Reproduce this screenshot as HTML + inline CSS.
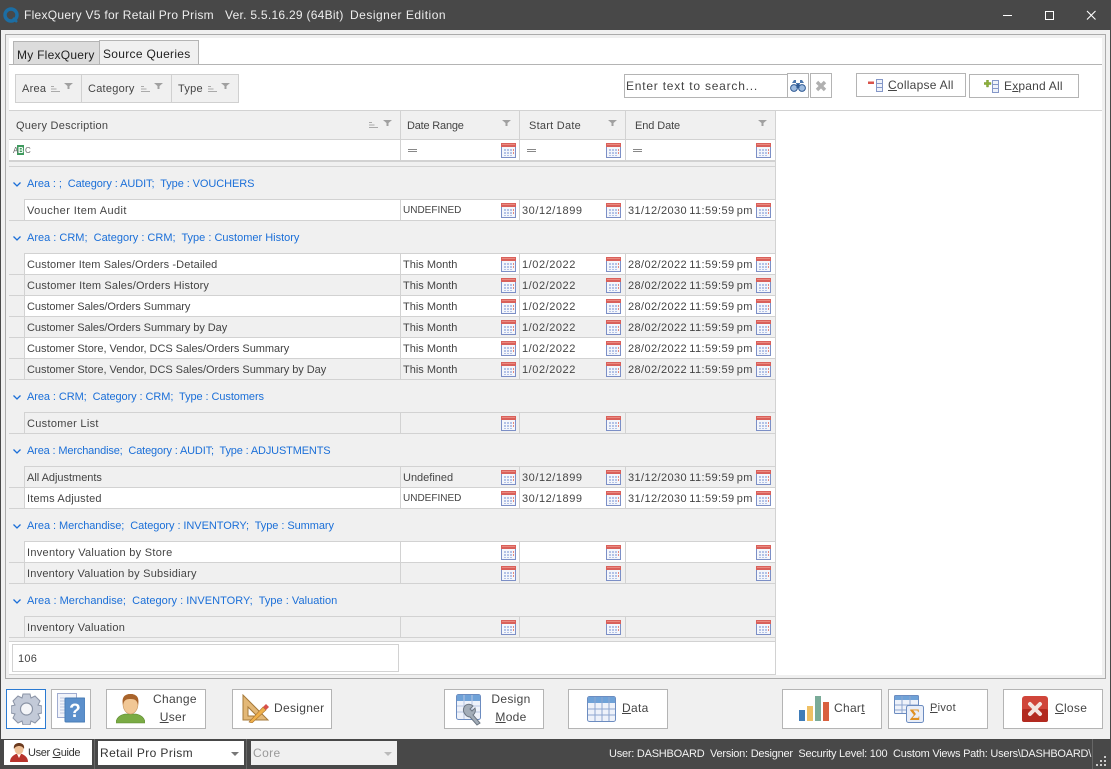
<!DOCTYPE html>
<html><head><meta charset="utf-8">
<style>
*{box-sizing:border-box}
html,body{margin:0;padding:0;width:1111px;height:769px;overflow:hidden;background:#f0f0f0}
body{position:relative;font-family:"Liberation Sans",sans-serif;font-size:11px;color:#444;letter-spacing:.25px}
.x{position:absolute}
.t{position:absolute;white-space:nowrap;line-height:14px}
.r{position:absolute;left:9px;width:767px;height:21px;border-bottom:1px solid #d2d2d2;border-right:1px solid #d2d2d2}
.r .bx{position:absolute;left:15px;top:0;width:751px;height:20px;background:#fff;border-left:1px solid #d2d2d2}
.r.g .bx{background:#f0f0f0}
.r .s{position:absolute;top:0;height:20px;width:1px;background:#d2d2d2}
.r .s1{left:391px}.r .s2{left:510px}.r .s3{left:616px}
.r span{position:absolute;top:4px;white-space:nowrap;line-height:14px}
.r .a{left:18px}.r .b{left:394px;letter-spacing:0}.r .b.u{font-size:10px}.r .c{left:513px;letter-spacing:.55px}.r .d{left:619px;letter-spacing:.4px;word-spacing:-1.2px}
.r svg,.cal{position:absolute;width:15px;height:15px}
.r svg{top:3px}
.i1{left:492px}.i2{left:597px}.i3{left:747px}
.gt{position:absolute;left:27px;color:#1b6fd8;white-space:nowrap;line-height:14px;letter-spacing:-.08px}
.ch{position:absolute;left:13px;width:8px;height:5px}
.btn{position:absolute;top:689px;width:100px;height:40px;background:#fff;border:1px solid #b4b4b4}
.btn svg{position:absolute}
.lbl{position:absolute;font-size:12px;line-height:18px;text-align:center;color:#444;white-space:nowrap;letter-spacing:.3px}
u{text-underline-offset:1px}
</style></head><body>
<svg width="0" height="0" style="position:absolute">
<symbol id="cal" viewBox="0 0 15 15">
<rect x=".5" y=".5" width="14" height="14" fill="#f4f6fb" stroke="#7c8fc6"/>
<rect x="0" y="0" width="15" height="4" fill="#d9605a"/>
<rect x="1" y="1" width="13" height="1" fill="#ea8a80"/>
<g fill="#b3c2e6"><rect x="3" y="6" width="2" height="2"/><rect x="6" y="6" width="2" height="2"/><rect x="9" y="6" width="2" height="2"/><rect x="12" y="6" width="1" height="2" fill="#e68a7e"/><rect x="3" y="9" width="2" height="2"/><rect x="6" y="9" width="2" height="2"/><rect x="9" y="9" width="2" height="2"/><rect x="12" y="9" width="1" height="2" fill="#e68a7e"/><rect x="3" y="12" width="2" height="1"/><rect x="6" y="12" width="2" height="1"/><rect x="9" y="12" width="2" height="1"/></g>
</symbol>
<symbol id="sort" viewBox="0 0 9 6"><path d="M0 .5h3M0 3h5.500M0 5.500h9" stroke="#aaa" fill="none"/></symbol>
<symbol id="fn" viewBox="0 0 9 6"><path d="M0 0h9L5.500 3v3h-2V3z" fill="#a0a0a0"/></symbol>
<symbol id="chev" viewBox="0 0 8 5"><path d="M.5 .5L4 4 7.500 .5" stroke="#1b6fd8" stroke-width="1.300" fill="none"/></symbol>
</svg>

<!-- title bar -->
<div class="x" style="left:0;top:0;width:1111px;height:30px;background:#484848"></div>
<svg class="x" style="left:3px;top:7px;width:16px;height:16px" viewBox="0 0 16 16"><circle cx="8" cy="8" r="6" fill="none" stroke="#1c6ea4" stroke-width="3.400"/><path d="M10 11l4 4" stroke="#1c6ea4" stroke-width="2.500"/></svg>
<div class="t" style="left:24px;top:8px;color:#eee;font-size:12px;letter-spacing:.28px">FlexQuery V5 for Retail Pro Prism</div>
<div class="t" style="left:225px;top:8px;color:#eee;font-size:12px;letter-spacing:.27px">Ver. 5.5.16.29 (64Bit)</div>
<div class="t" style="left:350px;top:8px;color:#eee;font-size:12px;letter-spacing:.5px">Designer Edition</div>
<div class="x" style="left:1003px;top:15px;width:9px;height:1px;background:#fff"></div>
<div class="x" style="left:1045px;top:11px;width:9px;height:9px;border:1px solid #fff"></div>
<svg class="x" style="left:1086px;top:10px;width:11px;height:11px" viewBox="0 0 11 11"><path d="M1 1l8.500 8.500M9.500 1L1 9.500" stroke="#fff" stroke-width="1.100" fill="none"/></svg>

<!-- window edges -->
<div class="x" style="left:0;top:30px;width:1px;height:710px;background:#484848"></div>
<div class="x" style="left:1110px;top:30px;width:1px;height:710px;background:#484848"></div>

<!-- main panel -->
<div class="x" style="left:5px;top:34px;width:1101px;height:645px;background:#f0f0f0;border:1px solid #ababab"></div>
<div class="x" style="left:9px;top:38px;width:1093px;height:637px;background:#fff"></div>

<!-- tabs -->
<div class="x" style="left:13px;top:41px;width:87px;height:24px;background:#dcdcdc;border:1px solid #b4b4b4"></div>
<div class="t" style="left:17px;top:48px;color:#222;font-size:12px;letter-spacing:.25px">My FlexQuery</div>
<div class="x" style="left:99px;top:40px;width:100px;height:25px;background:#f0f0f0;border:1px solid #b4b4b4;border-bottom:0"></div>
<div class="t" style="left:103px;top:47px;color:#222;font-size:12px;letter-spacing:.3px">Source Queries</div>
<div class="x" style="left:9px;top:64px;width:1093px;height:1px;background:#b4b4b4"></div>
<div class="x" style="left:99px;top:64px;width:100px;height:1px;background:#b4b4b4"></div>

<!-- group chips -->
<div class="x" style="left:15px;top:74px;width:224px;height:29px;background:#f0f0f0;border:1px solid #d0d0d0"></div>
<div class="x" style="left:81px;top:74px;width:1px;height:29px;background:#d0d0d0"></div>
<div class="x" style="left:171px;top:74px;width:1px;height:29px;background:#d0d0d0"></div>
<div class="t" style="left:22px;top:82px">Area</div>
<svg class="x" style="left:51px;top:86px;width:9px;height:6px"><use href="#sort"/></svg>
<svg class="x" style="left:64px;top:83px;width:9px;height:6px"><use href="#fn"/></svg>
<div class="t" style="left:88px;top:82px">Category</div>
<svg class="x" style="left:141px;top:86px;width:9px;height:6px"><use href="#sort"/></svg>
<svg class="x" style="left:154px;top:83px;width:9px;height:6px"><use href="#fn"/></svg>
<div class="t" style="left:178px;top:82px">Type</div>
<svg class="x" style="left:208px;top:86px;width:9px;height:6px"><use href="#sort"/></svg>
<svg class="x" style="left:221px;top:83px;width:9px;height:6px"><use href="#fn"/></svg>

<!-- search -->
<div class="x" style="left:624px;top:74px;width:164px;height:24px;background:#fff;border:1px solid #b4b4b4"></div>
<div class="t" style="left:626px;top:79px;font-size:12px;letter-spacing:.78px">Enter text to search...</div>
<div class="x" style="left:787px;top:73px;width:22px;height:25px;background:#fff;border:1px solid #b4b4b4"></div>
<svg class="x" style="left:790px;top:79px;width:16px;height:13px" viewBox="0 0 16 13"><path d="M2 4l2-3h2v4l2 1 2-1V1h2l2 3" fill="#4d78ae"/><circle cx="4" cy="9" r="3.400" fill="#9ebce0" stroke="#2f5a94"/><circle cx="12" cy="9" r="3.400" fill="#9ebce0" stroke="#2f5a94"/><rect x="6.500" y="5" width="3" height="4" fill="#2f5a94"/></svg>
<div class="x" style="left:810px;top:73px;width:22px;height:25px;background:#fff;border:1px solid #b4b4b4"></div>
<svg class="x" style="left:815px;top:80px;width:12px;height:12px" viewBox="0 0 12 12"><path d="M2 2l8 8M10 2l-8 8" stroke="#b0b0b0" stroke-width="3.400"/></svg>

<div class="x" style="left:856px;top:73px;width:110px;height:24px;background:#fff;border:1px solid #b4b4b4"></div>
<svg class="x" style="left:868px;top:79px;width:15px;height:13px" viewBox="0 0 15 13"><rect x="0" y="2.500" width="6" height="2.500" fill="#d8534a"/><rect x="8.500" y=".5" width="6" height="12" fill="#eef2fa" stroke="#8497c8"/><path d="M8.500 4.500h6M8.500 8.500h6" stroke="#8497c8"/></svg>
<div class="t" style="left:888px;top:78px;font-size:12px;letter-spacing:.25px"><u>C</u>ollapse All</div>
<div class="x" style="left:969px;top:74px;width:110px;height:24px;background:#fff;border:1px solid #b4b4b4"></div>
<svg class="x" style="left:984px;top:80px;width:15px;height:13px" viewBox="0 0 15 13"><path d="M2.500 0h2v2.500H7v2H4.500V7h-2V4.500H0v-2h2.500z" fill="#8cb038" stroke="#6d8a2a" stroke-width=".4"/><rect x="8.500" y=".5" width="6" height="12" fill="#eef2fa" stroke="#8497c8"/><path d="M8.500 4.500h6M8.500 8.500h6" stroke="#8497c8"/></svg>
<div class="t" style="left:1004px;top:79px;font-size:12px;letter-spacing:.2px">E<u>x</u>pand All</div>

<div class="x" style="left:9px;top:110px;width:1093px;height:1px;background:#d2d2d2"></div>

<!-- grid background -->
<div class="x" style="left:9px;top:111px;width:767px;height:530px;background:#f0f0f0;border-right:1px solid #d2d2d2"></div>
<!-- header -->
<div class="x" style="left:9px;top:139px;width:767px;height:1px;background:#d2d2d2"></div>
<div class="x" style="left:400px;top:111px;width:1px;height:49px;background:#d2d2d2"></div>
<div class="x" style="left:519px;top:111px;width:1px;height:49px;background:#d2d2d2"></div>
<div class="x" style="left:625px;top:111px;width:1px;height:49px;background:#d2d2d2"></div>
<div class="t" style="left:16px;top:119px">Query Description</div>
<svg class="x" style="left:369px;top:122px;width:9px;height:6px"><use href="#sort"/></svg>
<svg class="x" style="left:383px;top:120px;width:9px;height:6px"><use href="#fn"/></svg>
<div class="t" style="left:407px;top:119px;letter-spacing:-.2px">Date Range</div>
<svg class="x" style="left:502px;top:120px;width:9px;height:6px"><use href="#fn"/></svg>
<div class="t" style="left:529px;top:119px">Start Date</div>
<svg class="x" style="left:608px;top:120px;width:9px;height:6px"><use href="#fn"/></svg>
<div class="t" style="left:635px;top:119px;letter-spacing:-.1px">End Date</div>
<svg class="x" style="left:758px;top:120px;width:9px;height:6px"><use href="#fn"/></svg>

<!-- filter row -->
<div class="x" style="left:9px;top:140px;width:391px;height:20px;background:#fff"></div>
<div class="x" style="left:401px;top:140px;width:118px;height:20px;background:#fff"></div>
<div class="x" style="left:520px;top:140px;width:105px;height:20px;background:#fff"></div>
<div class="x" style="left:626px;top:140px;width:149px;height:20px;background:#fff"></div>
<div class="x" style="left:9px;top:160px;width:767px;height:2px;background:#d2d2d2"></div>
<div class="x" style="left:9px;top:166px;width:767px;height:1px;background:#d2d2d2"></div>
<div class="x" style="left:17px;top:145px;width:7px;height:10px;background:#3f9a5e"></div>
<div class="t" style="left:13px;top:146px;font-size:8px;line-height:9px;letter-spacing:0;color:#666">A</div>
<div class="t" style="left:18px;top:146px;font-size:8px;line-height:9px;letter-spacing:0;color:#fff;font-weight:bold">B</div>
<div class="t" style="left:25px;top:146px;font-size:8px;line-height:9px;letter-spacing:0;color:#666">C</div>
<div class="x" style="left:408px;top:149px;width:9px;height:3px;border-top:1px solid #888;border-bottom:1px solid #888"></div>
<div class="x" style="left:527px;top:149px;width:9px;height:3px;border-top:1px solid #888;border-bottom:1px solid #888"></div>
<div class="x" style="left:633px;top:149px;width:9px;height:3px;border-top:1px solid #888;border-bottom:1px solid #888"></div>
<svg class="cal" style="left:501px;top:143px"><use href="#cal"/></svg>
<svg class="cal" style="left:606px;top:143px"><use href="#cal"/></svg>
<svg class="cal" style="left:756px;top:143px"><use href="#cal"/></svg>

<!-- group 1 -->
<svg class="ch" style="top:182px"><use href="#chev"/></svg>
<div class="gt" style="top:177px">Area : ;&nbsp; Category : AUDIT;&nbsp; Type : VOUCHERS</div>
<div class="x" style="left:24px;top:199px;width:751px;height:1px;background:#d2d2d2"></div>
<div class="r" style="top:200px"><div class="bx"></div><div class="s s1"></div><div class="s s2"></div><div class="s s3"></div><span class="a" style="letter-spacing:.42px">Voucher Item Audit</span><span class="b u">UNDEFINED</span><span class="c">30/12/1899</span><span class="d">31/12/2030 11:59:59 pm</span><svg class="i1"><use href="#cal"/></svg><svg class="i2"><use href="#cal"/></svg><svg class="i3"><use href="#cal"/></svg></div>

<!-- group 2 -->
<svg class="ch" style="top:236px"><use href="#chev"/></svg>
<div class="gt" style="top:231px;letter-spacing:0">Area : CRM;&nbsp; Category : CRM;&nbsp; Type : Customer History</div>
<div class="x" style="left:24px;top:253px;width:751px;height:1px;background:#d2d2d2"></div>
<div class="r" style="top:254px"><div class="bx"></div><div class="s s1"></div><div class="s s2"></div><div class="s s3"></div><span class="a" style="letter-spacing:.11px">Customer Item Sales/Orders -Detailed</span><span class="b">This Month</span><span class="c">1/02/2022</span><span class="d">28/02/2022 11:59:59 pm</span><svg class="i1"><use href="#cal"/></svg><svg class="i2"><use href="#cal"/></svg><svg class="i3"><use href="#cal"/></svg></div>
<div class="r g" style="top:275px"><div class="bx"></div><div class="s s1"></div><div class="s s2"></div><div class="s s3"></div><span class="a" style="letter-spacing:.16px">Customer Item Sales/Orders History</span><span class="b">This Month</span><span class="c">1/02/2022</span><span class="d">28/02/2022 11:59:59 pm</span><svg class="i1"><use href="#cal"/></svg><svg class="i2"><use href="#cal"/></svg><svg class="i3"><use href="#cal"/></svg></div>
<div class="r" style="top:296px"><div class="bx"></div><div class="s s1"></div><div class="s s2"></div><div class="s s3"></div><span class="a" style="letter-spacing:-.06px">Customer Sales/Orders Summary</span><span class="b">This Month</span><span class="c">1/02/2022</span><span class="d">28/02/2022 11:59:59 pm</span><svg class="i1"><use href="#cal"/></svg><svg class="i2"><use href="#cal"/></svg><svg class="i3"><use href="#cal"/></svg></div>
<div class="r g" style="top:317px"><div class="bx"></div><div class="s s1"></div><div class="s s2"></div><div class="s s3"></div><span class="a" style="letter-spacing:-.06px">Customer Sales/Orders Summary by Day</span><span class="b">This Month</span><span class="c">1/02/2022</span><span class="d">28/02/2022 11:59:59 pm</span><svg class="i1"><use href="#cal"/></svg><svg class="i2"><use href="#cal"/></svg><svg class="i3"><use href="#cal"/></svg></div>
<div class="r" style="top:338px"><div class="bx"></div><div class="s s1"></div><div class="s s2"></div><div class="s s3"></div><span class="a" style="letter-spacing:-.04px">Customer Store, Vendor, DCS Sales/Orders Summary</span><span class="b">This Month</span><span class="c">1/02/2022</span><span class="d">28/02/2022 11:59:59 pm</span><svg class="i1"><use href="#cal"/></svg><svg class="i2"><use href="#cal"/></svg><svg class="i3"><use href="#cal"/></svg></div>
<div class="r g" style="top:359px"><div class="bx"></div><div class="s s1"></div><div class="s s2"></div><div class="s s3"></div><span class="a" style="letter-spacing:-.04px">Customer Store, Vendor, DCS Sales/Orders Summary by Day</span><span class="b">This Month</span><span class="c">1/02/2022</span><span class="d">28/02/2022 11:59:59 pm</span><svg class="i1"><use href="#cal"/></svg><svg class="i2"><use href="#cal"/></svg><svg class="i3"><use href="#cal"/></svg></div>

<!-- group 3 -->
<svg class="ch" style="top:395px"><use href="#chev"/></svg>
<div class="gt" style="top:390px">Area : CRM;&nbsp; Category : CRM;&nbsp; Type : Customers</div>
<div class="x" style="left:24px;top:412px;width:751px;height:1px;background:#d2d2d2"></div>
<div class="r g" style="top:413px"><div class="bx"></div><div class="s s1"></div><div class="s s2"></div><div class="s s3"></div><span class="a" style="letter-spacing:.3px">Customer List</span><svg class="i1"><use href="#cal"/></svg><svg class="i2"><use href="#cal"/></svg><svg class="i3"><use href="#cal"/></svg></div>

<!-- group 4 -->
<svg class="ch" style="top:449px"><use href="#chev"/></svg>
<div class="gt" style="top:444px;letter-spacing:-.15px">Area : Merchandise;&nbsp; Category : AUDIT;&nbsp; Type : ADJUSTMENTS</div>
<div class="x" style="left:24px;top:466px;width:751px;height:1px;background:#d2d2d2"></div>
<div class="r g" style="top:467px"><div class="bx"></div><div class="s s1"></div><div class="s s2"></div><div class="s s3"></div><span class="a" style="letter-spacing:-.02px">All Adjustments</span><span class="b">Undefined</span><span class="c">30/12/1899</span><span class="d">31/12/2030 11:59:59 pm</span><svg class="i1"><use href="#cal"/></svg><svg class="i2"><use href="#cal"/></svg><svg class="i3"><use href="#cal"/></svg></div>
<div class="r" style="top:488px"><div class="bx"></div><div class="s s1"></div><div class="s s2"></div><div class="s s3"></div><span class="a" style="letter-spacing:.18px">Items Adjusted</span><span class="b u">UNDEFINED</span><span class="c">30/12/1899</span><span class="d">31/12/2030 11:59:59 pm</span><svg class="i1"><use href="#cal"/></svg><svg class="i2"><use href="#cal"/></svg><svg class="i3"><use href="#cal"/></svg></div>

<!-- group 5 -->
<svg class="ch" style="top:524px"><use href="#chev"/></svg>
<div class="gt" style="top:519px;letter-spacing:-.06px">Area : Merchandise;&nbsp; Category : INVENTORY;&nbsp; Type : Summary</div>
<div class="x" style="left:24px;top:541px;width:751px;height:1px;background:#d2d2d2"></div>
<div class="r" style="top:542px"><div class="bx"></div><div class="s s1"></div><div class="s s2"></div><div class="s s3"></div><span class="a" style="letter-spacing:.29px">Inventory Valuation by Store</span><svg class="i1"><use href="#cal"/></svg><svg class="i2"><use href="#cal"/></svg><svg class="i3"><use href="#cal"/></svg></div>
<div class="r g" style="top:563px"><div class="bx"></div><div class="s s1"></div><div class="s s2"></div><div class="s s3"></div><span class="a" style="letter-spacing:.22px">Inventory Valuation by Subsidiary</span><svg class="i1"><use href="#cal"/></svg><svg class="i2"><use href="#cal"/></svg><svg class="i3"><use href="#cal"/></svg></div>

<!-- group 6 -->
<svg class="ch" style="top:599px"><use href="#chev"/></svg>
<div class="gt" style="top:594px;letter-spacing:.03px">Area : Merchandise;&nbsp; Category : INVENTORY;&nbsp; Type : Valuation</div>
<div class="x" style="left:24px;top:616px;width:751px;height:1px;background:#d2d2d2"></div>
<div class="r g" style="top:617px"><div class="bx"></div><div class="s s1"></div><div class="s s2"></div><div class="s s3"></div><span class="a">Inventory Valuation</span><svg class="i1"><use href="#cal"/></svg><svg class="i2"><use href="#cal"/></svg><svg class="i3"><use href="#cal"/></svg></div>

<!-- footer -->
<div class="x" style="left:9px;top:641px;width:767px;height:34px;background:#fff;border-top:1px solid #d2d2d2;border-right:1px solid #d2d2d2;border-bottom:1px solid #d2d2d2"></div>
<div class="x" style="left:12px;top:644px;width:387px;height:28px;background:#fff;border:1px solid #d2d2d2"></div>
<div class="t" style="left:18px;top:652px">106</div>

<!-- bottom buttons -->
<div class="btn" style="left:6px;width:40px;border-color:#2a7ad2;border-width:1px"></div>
<svg class="x" style="left:11px;top:693px;width:31px;height:32px" viewBox="0 0 31 32"><path d="M12 1h7l1 4 4-2 5 5-2 4 4 1v7l-4 1 2 4-5 5-4-2-1 4h-7l-1-4-4 2-5-5 2-4-4-1v-7l4-1-2-4 5-5 4 2z" fill="#c3cad8" stroke="#8a93a5"/><circle cx="15.500" cy="16" r="6" fill="#f4f5f8" stroke="#8a93a5" stroke-width="1.200"/></svg>
<div class="btn" style="left:51px;width:40px"></div>
<svg class="x" style="left:57px;top:693px;width:28px;height:30px" viewBox="0 0 28 30"><rect x=".5" y=".5" width="19" height="24" fill="#f2f4fa" stroke="#a0acd0"/><path d="M3 5h14M3 8h14M3 11h14M3 14h14M3 17h14M3 20h14" stroke="#c0c9e0"/><rect x="8" y="5" width="20" height="24" rx="1" fill="#5b8fcb" stroke="#4a7cb6"/><text x="18" y="24" font-size="19" font-weight="bold" fill="#fff" text-anchor="middle" font-family="Liberation Sans">?</text></svg>

<div class="btn" style="left:106px"></div>
<svg class="x" style="left:116px;top:694px;width:29px;height:30px" viewBox="0 0 29 30"><path d="M0 29c0-5 4-8 9-9h11c5 1 9 4 9 9z" fill="#7aab44" stroke="#5d8a30" stroke-width=".6"/><ellipse cx="14.500" cy="10" rx="7.500" ry="10" fill="#f1c795" stroke="#c49560" stroke-width=".6"/><path d="M7 11C5 2 10 0 14.500 0S24 2 22 11c-1-4-2-6-7.500-6S8 7 7 11z" fill="#a8632b"/></svg>
<div class="lbl" style="left:153px;top:690px;width:40px">Change</div>
<div class="lbl" style="left:153px;top:708px;width:40px"><u>U</u>ser</div>

<div class="btn" style="left:232px"></div>
<svg class="x" style="left:241px;top:694px;width:29px;height:29px" viewBox="0 0 29 29"><path d="M2 1v25h25z" fill="#e3b877" stroke="#a67a3a"/><path d="M7 13v9h9z" fill="#fff" stroke="#a67a3a"/><path d="M8 28L22 13l3 3-14 13z" fill="#efb04a" stroke="#a8702a" stroke-width=".6"/><path d="M22 13l3-3 3 3-3 3z" fill="#d8504a"/></svg>
<div class="lbl" style="left:274px;top:699px">Desi<u>g</u>ner</div>

<div class="btn" style="left:444px"></div>
<svg class="x" style="left:456px;top:694px;width:29px;height:32px" viewBox="0 0 29 32"><rect x=".5" y=".5" width="24" height="25" rx="2" fill="#eef2fa" stroke="#6c8cc0"/><rect x="1" y="1" width="23" height="6" fill="#6fa2d8"/><path d="M1 12h23M1 18h23M8 1v24M16 1v24" stroke="#b8c6e2"/><path d="M10 11a6 6 0 0 1 7 1l-3 3 2 2 3-3a6 6 0 0 1-2 7l7 8-3 2-7-8a6 6 0 0 1-5-3 6 6 0 0 1 1-9z" fill="#a3adb8" stroke="#6c7682"/></svg>
<div class="lbl" style="left:491px;top:690px;width:40px">Design</div>
<div class="lbl" style="left:491px;top:708px;width:40px"><u>M</u>ode</div>

<div class="btn" style="left:568px"></div>
<svg class="x" style="left:587px;top:696px;width:29px;height:27px" viewBox="0 0 29 27"><rect x=".5" y=".5" width="28" height="25" rx="2" fill="#eef2fa" stroke="#6c8cc0"/><rect x="1" y="1" width="27" height="6" fill="#6fa2d8"/><path d="M1 13h27M1 19h27M8 1v24M15 1v24M22 1v24" stroke="#8ea6d0"/></svg>
<div class="lbl" style="left:622px;top:699px"><u>D</u>ata</div>

<div class="btn" style="left:782px"></div>
<svg class="x" style="left:799px;top:696px;width:30px;height:27px" viewBox="0 0 30 27"><rect x="0" y="14" width="6" height="11" fill="#3f7cb8"/><rect x="8" y="10" width="6" height="15" fill="#efc064"/><rect x="16" y="0" width="6" height="25" fill="#7aab98"/><rect x="24" y="6" width="6" height="19" fill="#d9603e"/></svg>
<div class="lbl" style="left:834px;top:699px">Char<u>t</u></div>

<div class="btn" style="left:888px"></div>
<svg class="x" style="left:894px;top:695px;width:30px;height:30px" viewBox="0 0 30 30"><rect x=".5" y=".5" width="24" height="18" rx="1" fill="#eef2fa" stroke="#6c8cc0"/><rect x="1" y="1" width="23" height="4" fill="#6fa2d8"/><path d="M1 10h23M1 15h23M8 1v17M16 1v17" stroke="#8ea6d0"/><rect x="12.500" y="10.500" width="17" height="17" rx="2" fill="#e9eef8" stroke="#6c8cc0"/><text x="21" y="25" font-size="16" font-weight="bold" fill="#e09020" text-anchor="middle" font-family="Liberation Serif">Σ</text></svg>
<div class="lbl" style="left:930px;top:699px;font-size:11px"><u>P</u>ivot</div>

<div class="btn" style="left:1003px"></div>
<svg class="x" style="left:1022px;top:696px;width:26px;height:26px" viewBox="0 0 26 26"><rect width="26" height="26" rx="3" fill="#d0453a"/><rect y="13" width="26" height="13" rx="2" fill="#b22a20"/><path d="M8 8l10 10M18 8L8 18" stroke="#f3e4e0" stroke-width="4" stroke-linecap="round"/></svg>
<div class="lbl" style="left:1055px;top:699px"><u>C</u>lose</div>

<!-- status bar -->
<div class="x" style="left:0;top:739px;width:1111px;height:30px;background:#484848"></div>
<div class="x" style="left:4px;top:740px;width:88px;height:25px;background:#fff"></div>
<svg class="x" style="left:10px;top:743px;width:18px;height:20px" viewBox="0 0 18 20"><path d="M0 19c0-5 4-7 6-8h6c2 1 6 3 6 8z" fill="#b8332c"/><path d="M7 11h4l-2 4z" fill="#fff"/><ellipse cx="9" cy="6" rx="4.500" ry="5.500" fill="#eec097"/><path d="M4 6C3 1 7 0 9 0s6 1 5 6c-1-2-3-3-5-3S5 4 4 6z" fill="#6b3a1e"/></svg>
<div class="t" style="left:28px;top:746px;color:#333;letter-spacing:-.35px">User <u>G</u>uide</div>
<div class="x" style="left:94px;top:739px;width:1px;height:30px;background:#666"></div>
<div class="x" style="left:98px;top:741px;width:146px;height:24px;background:#fff"></div>
<div class="t" style="left:100px;top:746px;font-size:12px;color:#333;letter-spacing:.4px">Retail Pro Prism</div>
<div class="x" style="left:231px;top:752px;border:4px solid transparent;border-top:4px solid #777;border-bottom:0"></div>
<div class="x" style="left:246px;top:739px;width:1px;height:30px;background:#666"></div>
<div class="x" style="left:251px;top:741px;width:146px;height:24px;background:#f0f0f0"></div>
<div class="t" style="left:253px;top:746px;font-size:12px;color:#999;letter-spacing:.4px">Core</div>
<div class="x" style="left:384px;top:752px;border:4px solid transparent;border-top:4px solid #bbb;border-bottom:0"></div>
<div class="t" style="left:609px;top:747px;color:#f2f2f2;letter-spacing:-.24px">User: DASHBOARD&nbsp; Version: Designer&nbsp; Security Level: 100&nbsp; Custom Views Path: Users\DASHBOARD\</div>
<div class="x" style="left:1092px;top:739px;width:1px;height:30px;background:#666"></div>
<svg class="x" style="left:1096px;top:756px;width:11px;height:11px" viewBox="0 0 11 11"><g fill="#ccc"><rect x="8" y="0" width="2" height="2"/><rect x="4" y="4" width="2" height="2"/><rect x="8" y="4" width="2" height="2"/><rect x="0" y="8" width="2" height="2"/><rect x="4" y="8" width="2" height="2"/><rect x="8" y="8" width="2" height="2"/></g></svg>
</body></html>
